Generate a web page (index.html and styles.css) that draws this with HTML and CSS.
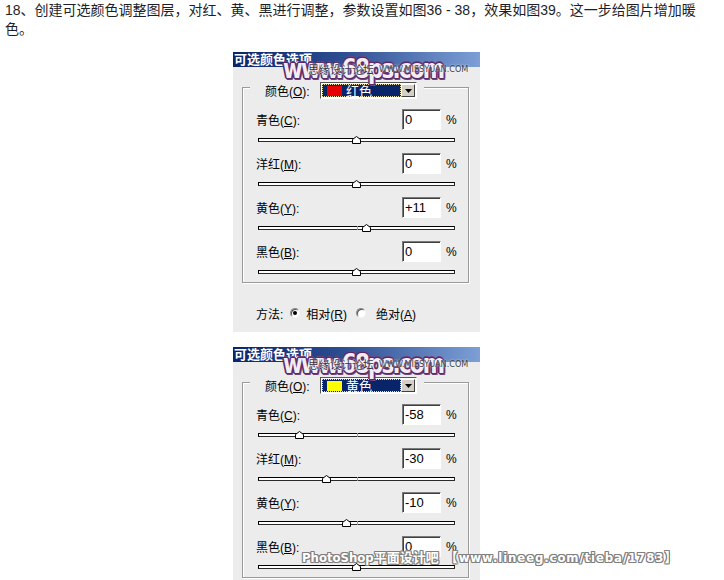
FILE: index.html
```html
<!DOCTYPE html>
<html lang="zh-CN">
<head>
<meta charset="utf-8">
<title>可选颜色</title>
<link rel="stylesheet" href="styles.css">
</head>
<body>
<div class="page">
  <p class="intro">18、创建可选颜色调整图层，对红、黄、黑进行调整，参数设置如图36 - 38，效果如图39。这一步给图片增加暖色。</p>

  <div class="dialog">
    <div class="titlebar">可选颜色选项</div>
    <div class="wm68">www.68ps.com</div>
    <div class="wmsmall"><span class="wm-cn">思缘设计论坛</span><span class="wm-en">WWW.MISSYUAN.COM</span></div>
    <div class="group">
      <div class="legend">
        <span class="lbl">颜色(<u>O</u>):</span>
        <div class="combo">
          <div class="sel"><span class="swatch red"></span><span class="seltext">红色</span></div>
          <div class="arrow"><svg width="7" height="4" viewBox="0 0 7 4"><path d="M0 0H7L3.5 4Z" fill="#000"/></svg></div>
        </div>
      </div>
      <div class="row">
        <div class="field"><span class="flabel">青色(<u>C</u>):</span><span class="input">0</span><span class="pct">%</span></div>
        <div class="track"><span class="thumb" style="left:50%"><svg width="9" height="8" viewBox="0 0 9 8"><path d="M0.5 3.5L4.5 0.5L8.5 3.5V7.5H0.5Z" fill="#fff" stroke="#000"/></svg></span></div>
      </div>
      <div class="row">
        <div class="field"><span class="flabel">洋红(<u>M</u>):</span><span class="input">0</span><span class="pct">%</span></div>
        <div class="track"><span class="thumb" style="left:50%"><svg width="9" height="8" viewBox="0 0 9 8"><path d="M0.5 3.5L4.5 0.5L8.5 3.5V7.5H0.5Z" fill="#fff" stroke="#000"/></svg></span></div>
      </div>
      <div class="row">
        <div class="field"><span class="flabel">黄色(<u>Y</u>):</span><span class="input">+11</span><span class="pct">%</span></div>
        <div class="track"><span class="thumb" style="left:55.5%"><svg width="9" height="8" viewBox="0 0 9 8"><path d="M0.5 3.5L4.5 0.5L8.5 3.5V7.5H0.5Z" fill="#fff" stroke="#000"/></svg></span></div>
      </div>
      <div class="row">
        <div class="field"><span class="flabel">黑色(<u>B</u>):</span><span class="input">0</span><span class="pct">%</span></div>
        <div class="track"><span class="thumb" style="left:50%"><svg width="9" height="8" viewBox="0 0 9 8"><path d="M0.5 3.5L4.5 0.5L8.5 3.5V7.5H0.5Z" fill="#fff" stroke="#000"/></svg></span></div>
      </div>
    </div>
    <div class="method">
      <span>方法:</span>
      <span class="radio checked r1"></span><span class="rlabel">相对(<u>R</u>)</span>
      <span class="radio r2"></span><span class="rlabel">绝对(<u>A</u>)</span>
    </div>
  </div>

  <div class="dialog dialog2">
    <div class="titlebar">可选颜色选项</div>
    <div class="wm68">www.68ps.com</div>
    <div class="wmsmall"><span class="wm-cn">思缘设计论坛</span><span class="wm-en">WWW.MISSYUAN.COM</span></div>
    <div class="group">
      <div class="legend">
        <span class="lbl">颜色(<u>O</u>):</span>
        <div class="combo">
          <div class="sel"><span class="swatch yellow"></span><span class="seltext">黄色</span></div>
          <div class="arrow"><svg width="7" height="4" viewBox="0 0 7 4"><path d="M0 0H7L3.5 4Z" fill="#000"/></svg></div>
        </div>
      </div>
      <div class="row">
        <div class="field"><span class="flabel">青色(<u>C</u>):</span><span class="input">-58</span><span class="pct">%</span></div>
        <div class="track"><span class="thumb" style="left:21%"><svg width="9" height="8" viewBox="0 0 9 8"><path d="M0.5 3.5L4.5 0.5L8.5 3.5V7.5H0.5Z" fill="#fff" stroke="#000"/></svg></span></div>
      </div>
      <div class="row">
        <div class="field"><span class="flabel">洋红(<u>M</u>):</span><span class="input">-30</span><span class="pct">%</span></div>
        <div class="track"><span class="thumb" style="left:35%"><svg width="9" height="8" viewBox="0 0 9 8"><path d="M0.5 3.5L4.5 0.5L8.5 3.5V7.5H0.5Z" fill="#fff" stroke="#000"/></svg></span></div>
      </div>
      <div class="row">
        <div class="field"><span class="flabel">黄色(<u>Y</u>):</span><span class="input">-10</span><span class="pct">%</span></div>
        <div class="track"><span class="thumb" style="left:45%"><svg width="9" height="8" viewBox="0 0 9 8"><path d="M0.5 3.5L4.5 0.5L8.5 3.5V7.5H0.5Z" fill="#fff" stroke="#000"/></svg></span></div>
      </div>
      <div class="row">
        <div class="field"><span class="flabel">黑色(<u>B</u>):</span><span class="input">0</span><span class="pct">%</span></div>
        <div class="track"><span class="thumb" style="left:50%"><svg width="9" height="8" viewBox="0 0 9 8"><path d="M0.5 3.5L4.5 0.5L8.5 3.5V7.5H0.5Z" fill="#fff" stroke="#000"/></svg></span></div>
      </div>
    </div>
    <div class="wmbottom"><span class="wmb-cn">PhotoShop平面设计吧</span><span class="wmb-url">【www.lineeg.com/tieba/1783】</span></div>
  </div>
</div>
</body>
</html>
```

FILE: styles.css
```css
html, body {
  margin: 0;
  padding: 0;
  background: #fff;
  overflow: hidden;
}

.page {
  margin-left: 5px;
  width: 703px;
}

.intro {
  margin: 0;
  padding-top: 1px;
  font-family: "Liberation Sans", "Noto Sans CJK SC", sans-serif;
  font-size: 14px;
  line-height: 19px;
  color: #1e1e28;
}

.dialog {
  position: relative;
  width: 247px;
  height: 280px;
  margin: 13px auto 0;
  background: #ececec;
  font-family: "Liberation Sans", "Noto Sans CJK SC", sans-serif;
  font-size: 12px;
  color: #000;
}

.dialog2 {
  margin-top: 15px;
  height: 233px;
}

.titlebar {
  height: 15px;
  padding-left: 1px;
  background: linear-gradient(90deg, #0a246a 0%, #2e4e92 45%, #7d9fd6 100%);
  color: #fff;
  font-family: "Noto Sans CJK SC", sans-serif;
  font-weight: bold;
  font-size: 13px;
  line-height: 14px;
  overflow: hidden;
}

.group {
  box-sizing: border-box;
  width: 227px;
  height: 196px;
  margin: 20px 0 0 9px;
  border: 1px solid #9a9a9a;
  box-shadow: inset 1px 1px 0 #fff, 1px 1px 0 #fff;
}

.legend {
  display: flex;
  align-items: center;
  width: fit-content;
  height: 17px;
  margin: -6px 0 0 7px;
  padding: 0 7px 0 15px;
  background: #ececec;
}

.lbl {
  width: 55px;
}

.combo {
  box-sizing: border-box;
  display: flex;
  width: 97px;
  height: 17px;
  padding: 1px;
  border: 1px solid;
  border-color: #555 #fff #fff #555;
  background: #fff;
}

.sel {
  box-sizing: border-box;
  flex: 1;
  display: flex;
  align-items: center;
  background: #0a246a;
  border: 1px dotted #e8e0b0;
  color: #fff;
}

.swatch {
  width: 15px;
  height: 10px;
  margin-left: 4px;
}

.red { background: #e60000; }
.yellow { background: #ffff00; }

.seltext {
  margin-left: 4px;
  font-family: "Noto Sans CJK SC", sans-serif;
  font-size: 13px;
  line-height: 13px;
}

.arrow {
  box-sizing: border-box;
  width: 14px;
  display: flex;
  align-items: center;
  justify-content: center;
  background: #d4d0c8;
  border: 1px solid;
  border-color: #fff #404040 #404040 #fff;
}

.row {
  margin-top: 10px;
  padding-bottom: 1px;
}

.field {
  display: flex;
  align-items: center;
  height: 21px;
}

.flabel {
  width: 146px;
  margin-left: 13px;
}

.input {
  box-sizing: border-box;
  width: 39px;
  height: 21px;
  padding-left: 2px;
  border: 1px solid;
  border-color: #7a7a7a #fff #fff #7a7a7a;
  box-shadow: inset 1px 1px 0 #404040;
  background: #fff;
  line-height: 19px;
  font-size: 13px;
}

.pct {
  margin-left: 5px;
}

.track {
  position: relative;
  box-sizing: border-box;
  width: 197px;
  height: 4px;
  margin: 8px 0 0 15px;
  border: 1px solid;
  border-color: #000 #2a2a2a #2a2a2a #000;
  background: #fff;
}

.track::after {
  content: "";
  position: absolute;
  left: 50%;
  top: -1px;
  width: 1px;
  height: 4px;
  background: #9a9a9a;
}

.thumb {
  position: absolute;
  top: -3px;
  margin-left: -5px;
  width: 9px;
  height: 8px;
  z-index: 1;
}

.thumb svg {
  display: block;
}

.method {
  display: flex;
  align-items: center;
  height: 14px;
  margin-top: 23px;
  padding-left: 23px;
}

.radio {
  box-sizing: border-box;
  position: relative;
  width: 10px;
  height: 10px;
  border-radius: 50%;
  border: 1px solid;
  border-color: #8a8a8a #f4f4f4 #f4f4f4 #8a8a8a;
  box-shadow: inset 1px 1px 0 #555;
  background: #fff;
}

.radio.checked::after {
  content: "";
  position: absolute;
  left: 2px;
  top: 2px;
  width: 4px;
  height: 4px;
  border-radius: 50%;
  background: #000;
}

.r1 { margin-left: 7px; }
.r2 { margin-left: 9px; }

.rlabel {
  margin-left: 6px;
}

.r2 + .rlabel {
  margin-left: 10px;
}

/* watermarks */
.wm68 {
  position: absolute;
  left: 50px;
  top: 3px;
  z-index: 3;
  font-family: "DejaVu Sans Condensed", "DejaVu Sans", sans-serif;
  font-weight: bold;
  font-size: 27px;
  line-height: 28px;
  letter-spacing: -2px;
  white-space: nowrap;
  transform: scaleX(0.88);
  transform-origin: left center;
  color: #f3ecf3;
  text-shadow:
    1px 0 0 #5a2a68, -1px 0 0 #5a2a68, 0 1px 0 #5a2a68, 0 -1px 0 #5a2a68,
    1px 1px 0 #5a2a68, -1px -1px 0 #5a2a68, 1px -1px 0 #5a2a68, -1px 1px 0 #5a2a68,
    2px 0 0 #6e3f7c, -2px 0 0 #6e3f7c, 0 2px 0 #6e3f7c, 0 -2px 0 #6e3f7c,
    2px 2px 0 #7d5088;
}

.wmsmall {
  position: absolute;
  left: 75px;
  top: 10px;
  z-index: 4;
  display: flex;
  align-items: center;
  height: 14px;
  white-space: nowrap;
}

.wm-cn {
  font-family: "Noto Sans CJK SC", sans-serif;
  font-size: 11px;
  color: #3a3040;
  text-shadow: 0 0 2px #fff, 0 0 1px #fff;
}

.wm-en {
  margin-left: 5px;
  font-family: "DejaVu Sans Condensed", "DejaVu Sans", sans-serif;
  font-size: 9px;
  color: #3c3c3c;
  text-shadow: 0 0 2px #fff;
}

.wmbottom {
  position: absolute;
  left: 69px;
  top: 203px;
  z-index: 4;
  display: flex;
  align-items: center;
  white-space: nowrap;
  font-family: "DejaVu Sans Condensed", "DejaVu Sans", "Noto Sans CJK SC", sans-serif;
  font-weight: bold;
  font-size: 13px;
  line-height: 16px;
  color: #fff;
  text-shadow:
    1px 0 0 #808080, -1px 0 0 #808080, 0 1px 0 #808080, 0 -1px 0 #808080,
    1px 1px 0 #808080, -1px -1px 0 #808080, 1px -1px 0 #808080, -1px 1px 0 #808080;
}

.wmb-url {
  margin-left: 6px;
  letter-spacing: 0.9px;
}
```
